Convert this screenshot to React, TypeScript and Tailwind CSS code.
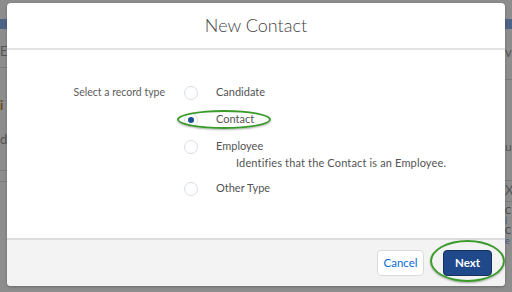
import React, { useState } from 'react';

const options = [
  { id: 'candidate', label: 'Candidate' },
  { id: 'contact', label: 'Contact' },
  { id: 'employee', label: 'Employee', description: 'Identifies that the Contact is an Employee.' },
  { id: 'other', label: 'Other Type' },
];

const Radio: React.FC<{ checked: boolean }> = ({ checked }) => (
  <span className="flex h-[14px] w-[14px] shrink-0 items-center justify-center rounded-full border border-[#d8dde6] bg-white">
    {checked && <span className="h-[6px] w-[6px] rounded-full bg-[#1b4f95]" />}
  </span>
);

// Dimmed page that peeks out behind the modal
const BackgroundPage: React.FC = () => (
  <div className="flex h-[292px] w-[512px] justify-between bg-[#8d8d8d] text-[#5a5a5a]">
    <div className="flex w-[7px] flex-col overflow-hidden">
      <div className="mt-[19px] h-[10px] bg-[#4d6385]" />
      <div className="mt-[15px] text-[13px] leading-[14px] text-[#555]">E</div>
      <div className="mt-[9px] h-px bg-[#7c7c7c]" />
      <div className="mt-[30px] text-[13px] font-bold leading-[14px] text-[#6a4a1a]">i</div>
      <div className="mt-[20px] text-[13px] leading-[14px] text-[#555]">d</div>
      <div className="mt-[24px] h-px bg-[#7c7c7c]" />
      <div className="mt-[10px] h-px bg-[#7c7c7c]" />
    </div>
    <div className="flex w-[7px] flex-col overflow-hidden">
      <div className="mt-[19px] h-[10px] bg-[#4d6385]" />
      <div className="mt-[16px] text-[13px] leading-[14px] text-[#555]">v</div>
      <div className="mt-[20px] h-px bg-[#7c7c7c]" />
      <div className="mt-[60px] text-[12px] leading-[14px] text-[#555]">u</div>
      <div className="mt-[26px] h-px bg-[#7c7c7c]" />
      <div className="mt-[2px] text-[13px] leading-[14px] text-[#555]">X</div>
      <div className="mt-[4px] h-px bg-[#7c7c7c]" />
      <div className="mt-[4px] text-[9px] leading-[10px] text-[#444]">C</div>
      <div className="text-[9px] leading-[10px] text-[#3d5a8a]">i</div>
      <div className="text-[9px] leading-[10px] text-[#444]">C</div>
      <div className="text-[9px] leading-[10px] text-[#3d5a8a]">e</div>
    </div>
  </div>
);

export default function App() {
  const [selected, setSelected] = useState('contact');

  return (
    <div className="relative h-[292px] w-[512px] overflow-hidden font-['Lato',sans-serif]">
      <BackgroundPage />

      {/* Modal */}
      <div className="absolute left-[7px] top-[3px] flex h-[283px] w-[498px] flex-col overflow-hidden rounded-[4px] bg-white shadow-[0_1px_3px_rgba(0,0,0,0.25)]">
        <div className="flex h-[47px] shrink-0 items-center justify-center border-b-2 border-[#e2e2e2]">
          <h2 className="text-[18px] font-light text-[#444]">New Contact</h2>
        </div>

        <div className="flex flex-1 pt-[29px]">
          <div className="flex h-[27px] w-[158px] items-center justify-end text-[10.5px] text-[#5c5c5c]">
            Select a record type
          </div>
          <div className="ml-[19px] flex flex-col">
            {options.map((opt) => (
              <div key={opt.id} className={opt.id === 'other' ? 'mt-[4px]' : ''}>
                <label
                  className="flex h-[27px] cursor-pointer items-center"
                  onClick={() => setSelected(opt.id)}
                >
                  <Radio checked={selected === opt.id} />
                  <span className="ml-[18px] text-[11px] text-[#545454]">{opt.label}</span>
                </label>
                {opt.description && (
                  <div className="-mt-[5px] h-[16px] pl-[52px] text-[11px] leading-[16px] tracking-[0.15px] text-[#545454]">
                    {opt.description}
                  </div>
                )}
              </div>
            ))}
          </div>
        </div>

        <div className="flex h-[48px] shrink-0 items-center justify-end gap-[19px] border-t-2 border-[#dddddd] bg-[#f3f3f3] pr-[13px]">
          <button className="h-[26px] w-[47px] rounded-[4px] border border-[#dddbda] bg-white text-[11.5px] text-[#0a6bd1]">
            Cancel
          </button>
          <button className="h-[26px] w-[49px] rounded-[4px] border border-[#16325c] bg-[#20498c] text-[11.5px] font-bold text-white">
            Next
          </button>
        </div>
      </div>

      {/* Green highlight annotations */}
      <div className="absolute left-[177px] top-[110px] h-[19px] w-[94px] rounded-[50%] border-2 border-[#3a9a2a] shadow-[0_1px_2px_rgba(0,0,0,0.3)]" />
      <div className="absolute left-[430px] top-[240px] h-[42px] w-[75px] rounded-[50%] border-2 border-[#3a9a2a] shadow-[0_1px_2px_rgba(0,0,0,0.3)]" />
    </div>
  );
}
